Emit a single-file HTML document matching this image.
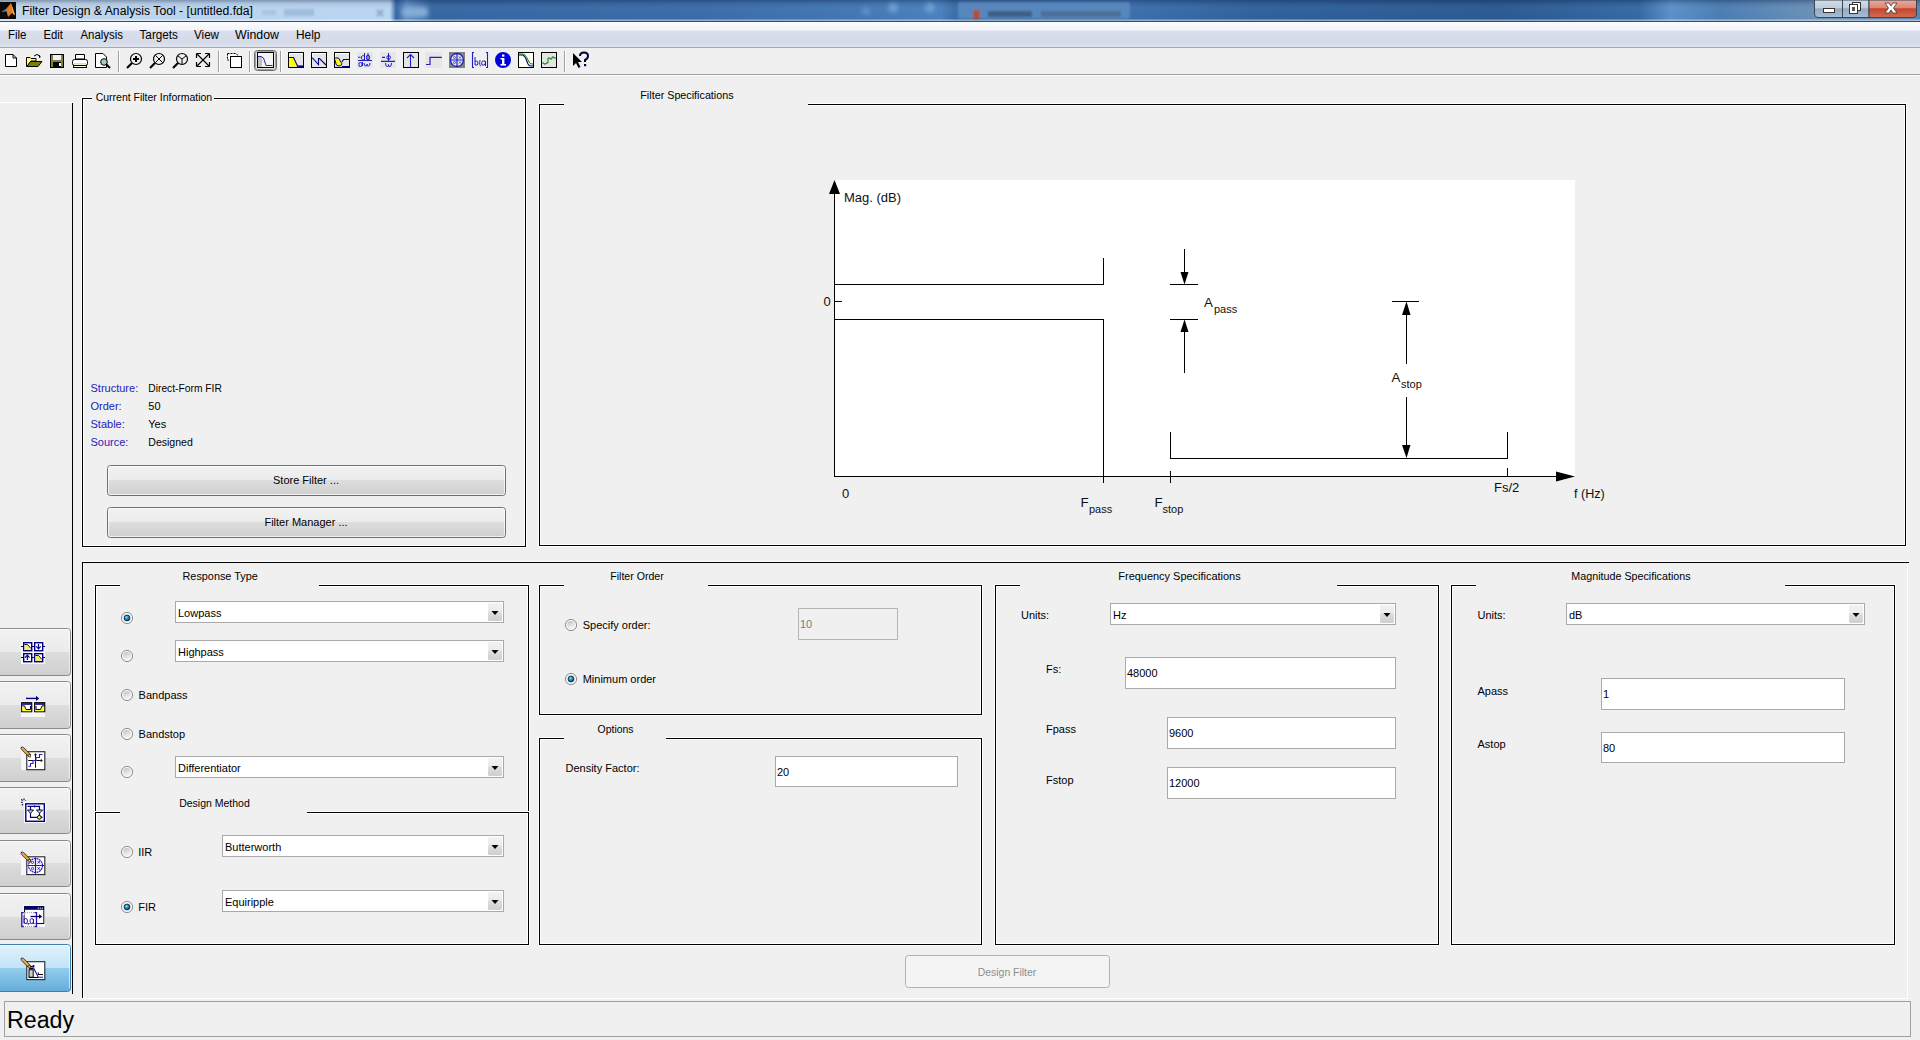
<!DOCTYPE html>
<html><head><meta charset="utf-8"><title>Filter Design &amp; Analysis Tool</title>
<style>html,body{margin:0;padding:0;width:1920px;height:1040px;overflow:hidden;background:#f0f0f0;font-family:"Liberation Sans",sans-serif;}
svg text{font-family:"Liberation Sans",sans-serif;}</style></head>
<body><div style="position:relative;width:1920px;height:1040px;overflow:hidden">
<svg width="1920" height="1040" viewBox="0 0 1920 1040" style="position:absolute;left:0;top:0" font-family="Liberation Sans">
<defs>
<linearGradient id="tb" x1="0" y1="0" x2="1" y2="0">
 <stop offset="0" stop-color="#c0d5ea"/>
 <stop offset="0.10" stop-color="#bbd4ee"/>
 <stop offset="0.2031" stop-color="#b8d5f2"/>
 <stop offset="0.2063" stop-color="#3466a2"/>
 <stop offset="0.2120" stop-color="#5d8fc5"/>
 <stop offset="0.2250" stop-color="#3466a2"/>
 <stop offset="0.3646" stop-color="#3a6ba8"/>
 <stop offset="0.448" stop-color="#4277b3"/>
 <stop offset="0.49" stop-color="#4a80bd"/>
 <stop offset="0.497" stop-color="#3a6da8"/>
 <stop offset="0.589" stop-color="#3a6eab"/>
 <stop offset="0.656" stop-color="#2f609b"/>
 <stop offset="0.78" stop-color="#2a5890"/>
 <stop offset="0.854" stop-color="#3468a3"/>
 <stop offset="0.87" stop-color="#5a90c8"/>
 <stop offset="0.896" stop-color="#4a7cb2"/>
 <stop offset="0.945" stop-color="#6a90b8"/>
 <stop offset="1" stop-color="#5a84b0"/>
</linearGradient>
<linearGradient id="tbv" x1="0" y1="0" x2="0" y2="1">
 <stop offset="0" stop-color="#102040" stop-opacity="0.35"/>
 <stop offset="0.18" stop-color="#102040" stop-opacity="0.08"/>
 <stop offset="0.5" stop-color="#fff" stop-opacity="0.02"/>
 <stop offset="0.9" stop-color="#fff" stop-opacity="0.0"/>
 <stop offset="0.95" stop-color="#fff" stop-opacity="0.45"/>
 <stop offset="1" stop-color="#fff" stop-opacity="0.45"/>
</linearGradient>
<linearGradient id="menu" x1="0" y1="0" x2="0" y2="1">
 <stop offset="0" stop-color="#fbfcfe"/>
 <stop offset="0.33" stop-color="#f1f3f9"/>
 <stop offset="0.36" stop-color="#d9deec"/>
 <stop offset="0.8" stop-color="#d6dbea"/>
 <stop offset="1" stop-color="#dfe3ef"/>
</linearGradient>
<linearGradient id="btn" x1="0" y1="0" x2="0" y2="1">
 <stop offset="0" stop-color="#f2f2f2"/>
 <stop offset="0.5" stop-color="#ebebeb"/>
 <stop offset="0.5" stop-color="#dddddd"/>
 <stop offset="1" stop-color="#cfcfcf"/>
</linearGradient>
<linearGradient id="btnsel" x1="0" y1="0" x2="0" y2="1">
 <stop offset="0" stop-color="#e3f3fc"/>
 <stop offset="0.5" stop-color="#c1e3f6"/>
 <stop offset="0.5" stop-color="#92cdee"/>
 <stop offset="1" stop-color="#64acd8"/>
</linearGradient>
<linearGradient id="ddb" x1="0" y1="0" x2="0" y2="1">
 <stop offset="0" stop-color="#f2f2f2"/>
 <stop offset="0.45" stop-color="#ebebeb"/>
 <stop offset="0.5" stop-color="#dddddd"/>
 <stop offset="1" stop-color="#cfcfcf"/>
</linearGradient>
<linearGradient id="wbtn" x1="0" y1="0" x2="0" y2="1">
 <stop offset="0" stop-color="#d3dde9"/>
 <stop offset="0.45" stop-color="#c1cdda"/>
 <stop offset="0.5" stop-color="#93a9c3"/>
 <stop offset="1" stop-color="#a9bdd3"/>
</linearGradient>
<linearGradient id="wclose" x1="0" y1="0" x2="0" y2="1">
 <stop offset="0" stop-color="#e9a99c"/>
 <stop offset="0.45" stop-color="#dd8674"/>
 <stop offset="0.5" stop-color="#c3452c"/>
 <stop offset="1" stop-color="#d86b55"/>
</linearGradient>
<radialGradient id="rdot" cx="0.4" cy="0.35" r="0.6">
 <stop offset="0" stop-color="#8ee4fa"/>
 <stop offset="0.5" stop-color="#2f8fc4"/>
 <stop offset="1" stop-color="#0d4a74"/>
</radialGradient>
<linearGradient id="rbg" x1="0.2" y1="0" x2="0.6" y2="1">
 <stop offset="0" stop-color="#c2c2c2"/>
 <stop offset="0.5" stop-color="#dedede"/>
 <stop offset="1" stop-color="#f6f6f6"/>
</linearGradient>
<filter id="bl1" x="-50%" y="-50%" width="200%" height="200%"><feGaussianBlur stdDeviation="1.3"/></filter>
<filter id="bl2" x="-50%" y="-50%" width="200%" height="200%"><feGaussianBlur stdDeviation="2.2"/></filter>
</defs>
<rect x="0" y="0" width="1920" height="1040" fill="#f0f0f0" />
<rect x="0" y="0" width="1920" height="21" fill="url(#tb)" />
<rect x="0" y="0" width="1920" height="21" fill="url(#tbv)" />
<g filter="url(#bl1)"><rect x="262" y="10" width="14" height="5" fill="#a5c0de" opacity="0.8"/><rect x="284" y="9" width="30" height="7" fill="#98b6d6" opacity="0.8"/><path d="M377 10 L383 16 M383 10 L377 16" stroke="#8ea7c2" stroke-width="2"/></g>
<g filter="url(#bl2)"><rect x="402" y="7" width="26" height="10" rx="4" fill="#86acd6"/><circle cx="866" cy="11" r="4" fill="#5d90c8"/><circle cx="893" cy="8" r="5" fill="#6a9ed2"/><circle cx="930" cy="8" r="5" fill="#6a9ed2"/></g>
<g filter="url(#bl1)"><rect x="958" y="2" width="172" height="17" rx="2" fill="#5f90c4" opacity="0.7"/><rect x="973" y="10" width="7" height="9" fill="#b0503a"/><rect x="988" y="11" width="44" height="6" fill="#3c5f88"/><rect x="1041" y="11" width="80" height="6" fill="#4d6f98"/></g>
<rect x="0" y="21" width="1921" height="1" fill="#3d4b5a" />
<g><rect x="0" y="2" width="16" height="17" fill="#0b0b0b"/><path d="M1 12 L6 9 L8 11 Z" fill="#3aa6c0"/><path d="M6 9 L11 3 L15 15 L12 13 L8 17 Z" fill="#e07b2a"/><path d="M11 3 L15 15 L13 14 Z" fill="#f5b45a"/></g>
<text x="22" y="15" font-size="12" fill="#000" textLength="231" lengthAdjust="spacingAndGlyphs" >Filter Design &amp; Analysis Tool - [untitled.fda]</text>
<g>
<path d="M1814.5 0 V14 Q1814.5 17.5 1818 17.5 H1869 V0 Z" fill="url(#wbtn)" stroke="#3a4553" stroke-width="1"/>
<path d="M1869 0 V17.5 H1913 Q1916.5 17.5 1916.5 14 V0 Z" fill="url(#wclose)" stroke="#3a4553" stroke-width="1"/>
<rect x="1842" y="0" width="1" height="18" fill="#3a4553" />
<rect x="1823.5" y="8.5" width="11" height="4" fill="#fff" stroke="#333" stroke-width="1"/>
<rect x="1852.5" y="2.5" width="8" height="8" fill="#fff" stroke="#333" stroke-width="1"/>
<rect x="1849.5" y="4.5" width="8" height="9" fill="#fff" stroke="#333" stroke-width="1"/>
<rect x="1852" y="7" width="3" height="4" fill="#555"/>
<path d="M1885 3 L1889 3 L1891 6 L1893 3 L1897 3 L1893.5 8 L1897 13 L1893 13 L1891 10 L1889 13 L1885 13 L1888.5 8 Z" fill="#fff" stroke="#3b3b3b" stroke-width="0.8"/>
</g>
<rect x="0" y="22" width="1920" height="25" fill="url(#menu)" />
<rect x="0" y="47" width="1921" height="1" fill="#a7a7a7" />
<text x="8" y="39" font-size="12" fill="#000" textLength="18.5" lengthAdjust="spacingAndGlyphs" >File</text>
<text x="43.5" y="39" font-size="12" fill="#000" textLength="19.5" lengthAdjust="spacingAndGlyphs" >Edit</text>
<text x="80.5" y="39" font-size="12" fill="#000" textLength="42.5" lengthAdjust="spacingAndGlyphs" >Analysis</text>
<text x="139.5" y="39" font-size="12" fill="#000" textLength="38.5" lengthAdjust="spacingAndGlyphs" >Targets</text>
<text x="194" y="39" font-size="12" fill="#000" textLength="25" lengthAdjust="spacingAndGlyphs" >View</text>
<text x="235" y="39" font-size="12" fill="#000" textLength="44" lengthAdjust="spacingAndGlyphs" >Window</text>
<text x="296" y="39" font-size="12" fill="#000" textLength="24.5" lengthAdjust="spacingAndGlyphs" >Help</text>
<rect x="0" y="48" width="1920" height="26" fill="#f0f0f0" />
<rect x="0" y="74" width="1921" height="1" fill="#a0a0a0" />
<rect x="0" y="75" width="1921" height="1" fill="#ffffff" />
<rect x="118" y="51" width="1" height="21" fill="#a0a0a0" />
<rect x="119" y="51" width="1" height="21" fill="#ffffff" />
<rect x="218" y="51" width="1" height="21" fill="#a0a0a0" />
<rect x="219" y="51" width="1" height="21" fill="#ffffff" />
<rect x="249" y="51" width="1" height="21" fill="#a0a0a0" />
<rect x="250" y="51" width="1" height="21" fill="#ffffff" />
<rect x="280" y="51" width="1" height="21" fill="#a0a0a0" />
<rect x="281" y="51" width="1" height="21" fill="#ffffff" />
<rect x="564" y="51" width="1" height="21" fill="#a0a0a0" />
<rect x="565" y="51" width="1" height="21" fill="#ffffff" />
<path d="M5.5 54.5 H13 L16.5 58 V66.5 H5.5 Z" fill="#fff" stroke="#000"/><path d="M13 54.5 V58 H16.5" fill="none" stroke="#000"/>
<path d="M26.5 57.5 H30 L31 58.5 H36 V61 H31 L27 66.5 H26.5 Z" fill="#ffff80" stroke="#000"/><path d="M27 66.5 L30.5 61.5 H42 L38 66.5 Z" fill="#808000" stroke="#000"/><path d="M34 56 Q37 53 40 56" fill="none" stroke="#000"/><path d="M39 55 L41 57 L39 58" fill="#000"/>
<rect x="50.5" y="54.5" width="13" height="13" fill="#808040" stroke="#000"/><rect x="53" y="55" width="8" height="5" fill="#f0f0f0"/><rect x="53" y="62" width="8" height="5" fill="#000"/><rect x="59" y="63" width="2" height="3" fill="#fff"/>
<path d="M75.5 54.5 H84.5 V59 H75.5 Z" fill="#fff" stroke="#000"/><rect x="72.5" y="59.5" width="15" height="6" rx="2" fill="#fff" stroke="#000"/><rect x="74" y="63" width="12" height="1.5" fill="#e8e870"/><rect x="73.5" y="65.5" width="13" height="2" fill="#fff" stroke="#000"/>
<path d="M95.5 53.5 H103 L106.5 57 V67.5 H95.5 Z" fill="#fff" stroke="#000"/><circle cx="104" cy="62" r="3.3" fill="#a8c8c8" stroke="#000"/><path d="M106 64 L110 68" stroke="#000" stroke-width="2"/>
<circle cx="136" cy="59" r="5.5" fill="#f0f0f0" stroke="#000" stroke-width="1.2"/><path d="M132 63 L127 68" stroke="#000" stroke-width="2.2"/><path d="M133 59 H139 M136 56 V62" stroke="#000" stroke-width="2"/>
<circle cx="159" cy="59" r="5.5" fill="#f0f0f0" stroke="#000" stroke-width="1.2"/><path d="M155 63 L150 68" stroke="#000" stroke-width="2.2"/><path d="M155.5 55.5 L162.5 62.5 M162.5 55.5 L155.5 62.5" stroke="#000" stroke-width="1"/>
<circle cx="182" cy="59" r="5.5" fill="#f0f0f0" stroke="#000" stroke-width="1.2"/><path d="M178 63 L173 68" stroke="#000" stroke-width="2.2"/><path d="M182 59 V64 M182 59 L178 56 M182 59 L186 56" stroke="#000" stroke-width="1"/>
<path d="M197 54 L209 66 M209 54 L197 66" stroke="#000" stroke-width="1.2"/><path d="M196.5 53.5 H201 M196.5 53.5 V58 M209.5 53.5 H205 M209.5 53.5 V58 M196.5 66.5 H201 M196.5 66.5 V62 M209.5 66.5 H205 M209.5 66.5 V62" stroke="#000" stroke-width="1.2"/>
<path d="M227.5 53.5 H236 L237.5 55 V60 H227.5 Z" fill="#fff" stroke="#000" stroke-dasharray="2 1"/><rect x="230.5" y="56.5" width="11" height="11" fill="#fff" stroke="#000"/>
<rect x="254.5" y="50.5" width="22" height="20" rx="3" fill="#dcdcdc" stroke="#6b6b6b"/><rect x="255.5" y="51.5" width="20" height="18" rx="2" fill="#e6e6e6" stroke="#a0a0a0"/><rect x="257.5" y="52.5" width="16" height="15" fill="#f4f4f4" stroke="#000"/><rect x="258" y="57" width="4" height="10" fill="#c0c0c0"/><path d="M258 56.5 H261 L263.5 58 L266 65.5 H272.5" fill="none" stroke="#2020c0"/>
<rect x="288.5" y="52.5" width="15" height="15" fill="#e4e4e4" stroke="#000"/><rect x="289" y="53" width="14" height="14" fill="#e4e4e4"/><path d="M289 53.5 H303 M289.5 53 V58" stroke="#fff"/><path d="M289 58 H293 L297 66.5 H289 Z" fill="#ffff00"/><path d="M289 57.5 H293.5 L297.5 66 H303" fill="none" stroke="#000080" stroke-width="1.1"/><path d="M297 66.5 H303" stroke="#000080" stroke-width="1.2"/>
<rect x="311.5" y="52.5" width="15" height="15" fill="#e4e4e4" stroke="#000"/><path d="M312 53.5 H326 M312.5 53 V58" stroke="#fff"/><path d="M312 57.5 L318.5 64.5 V58.5 H319.5 L326 65" fill="none" stroke="#000080" stroke-width="1.1"/>
<rect x="334.5" y="52.5" width="15" height="15" fill="#e4e4e4" stroke="#000"/><path d="M335 53.5 H349 M335.5 53 V58" stroke="#fff"/><path d="M335 58.5 H338.5 L341.5 63.5 L341 65.5 H337 Z" fill="#ffff00"/><path d="M335 58 H338.5 L341.8 63.5 Q342 65.8 340 65.8 H338 Q336.5 65.8 336 64 L335 60" fill="none" stroke="#000080" stroke-width="1"/><path d="M342 62 L343.5 59.5 H349 M342 66.5 H349" fill="none" stroke="#000080" stroke-width="1.1"/>
<rect x="357" y="52" width="16" height="16" fill="#e6e6e6"/><path d="M358 60.5 H372 M358 57.3 H360.5" fill="none" stroke="#2020c0" stroke-width="1.1"/><path d="M364.5 53 V60 M361.5 57.8 A1.6 1.6 0 1 0 364.5 57.8 A1.6 1.6 0 1 0 361.5 57.8 M368 53 V60 M366.5 57.5 A1.6 1.8 0 1 0 369.6 57.5 A1.6 1.8 0 1 0 366.5 57.5 M362.5 62 V66 M361.8 64.5 A1.5 1.5 0 1 0 359 64.5 A1.5 1.5 0 1 0 361.8 64.5 M364 63 Q364 66.5 366 66 Q367 66.5 367 64 Q367 66.5 368.5 66 Q370 66 370 63" fill="none" stroke="#2020c0" stroke-width="1"/>
<rect x="380" y="52" width="16" height="16" fill="#e6e6e6"/><path d="M381 61.3 H395 M382 57.3 H385" fill="none" stroke="#2020c0" stroke-width="1.2"/><path d="M388.5 53 V61 M386.8 57.5 A1.8 2 0 1 0 390.4 57.5 A1.8 2 0 1 0 386.8 57.5 M385.5 63 Q385.5 67 387.5 66.5 Q388.5 67 388.5 64.5 Q388.5 67 390 66.5 Q391.5 66.5 391.5 63" fill="none" stroke="#2020c0" stroke-width="1"/>
<rect x="403.5" y="52.5" width="15" height="15" fill="#e4e4e4" stroke="#000"/><path d="M410.5 67 V54.5 M407 58 L410.5 54.5 L414 58" fill="none" stroke="#2020c0" stroke-width="1.1"/>
<rect x="425" y="52" width="17" height="16" fill="#e6e6e6"/><path d="M426 64.5 H430 V57.3 H441.8" fill="none" stroke="#2020c0" stroke-width="1.2"/>
<rect x="449" y="52" width="16" height="16" fill="#808080"/><circle cx="457" cy="60" r="6.5" fill="#e8e8e8" stroke="#2020c0" stroke-width="1.3"/><path d="M457 53.5 V66.5 M450.5 60 H463.5" stroke="#2020c0" stroke-width="1.2"/><circle cx="454.5" cy="57.5" r="1" fill="none" stroke="#2020c0" stroke-width="0.7"/><circle cx="454.5" cy="62.5" r="1" fill="none" stroke="#2020c0" stroke-width="0.7"/><path d="M459 56.5 L461 58.5 M461 56.5 L459 58.5 M459 61.5 L461 63.5 M461 61.5 L459 63.5" stroke="#2020c0" stroke-width="0.7"/>
<path d="M474 52.5 H472.5 V67.5 H474 M486 52.5 H487.5 V67.5 H486" fill="none" stroke="#2020c0" stroke-width="1.1"/><path d="M475 57 V65 Q478 66 478 63 Q478 60 475 61.5 M480 60 Q479 66 481 66 M482.5 61 Q486 60 485.5 63 Q485 66 482 65 Q481 62 482.5 61 M485.5 61 V66" fill="none" stroke="#2020c0" stroke-width="1"/>
<circle cx="503" cy="60" r="8" fill="#0000e0"/><rect x="502" y="58" width="2.4" height="6" fill="#fff"/><rect x="500.5" y="64" width="5.5" height="1.6" fill="#fff"/><rect x="500.5" y="58" width="3" height="1.4" fill="#fff"/><rect x="502" y="54.5" width="2.4" height="2.2" fill="#fff"/>
<rect x="518.5" y="52.5" width="15" height="15" fill="#fffff4" stroke="#000"/><path d="M519 55 H522 Q524 55 526 59 L528 64 Q529 66 531 66 H533" fill="none" stroke="#000080" stroke-width="1.1"/><path d="M519 54 H523 Q525 54 527 58 L529 62 Q530 64 532 64 H533" fill="none" stroke="#008000" stroke-width="1"/>
<rect x="541.5" y="52.5" width="15" height="15" fill="#e4e4e4" stroke="#000"/><path d="M542 63 H544 V64 H546 V63 H548 V58 H550 V59 H552 V57 H554 V58 H556" fill="none" stroke="#008000" stroke-width="1"/>
<path d="M573 53 V66 L576 63 L578.5 68 L580.5 67 L578 62 H582 Z" fill="#000"/><path d="M580 56 Q580 52.5 584 52.5 Q588 52.5 588 56 Q588 58.5 585 60 V62" fill="none" stroke="#000040" stroke-width="2"/><rect x="584" y="64" width="2.2" height="2.2" fill="#000040"/>
<rect x="0" y="102" width="73" height="1" fill="#ffffff" />
<rect x="72" y="103" width="1" height="891" fill="#000" />
<path d="M-3 628.5 H67.5 Q70.5 628.5 70.5 631.5 V672.5 Q70.5 675.5 67.5 675.5 H-3 Z" fill="url(#btn)" stroke="#8a8a8a"/>
<path d="M-3 629.5 H67.5 Q69.5 629.5 69.5 631.5 V672.5" fill="none" stroke="#fff" stroke-opacity="0.6"/>
<path d="M-3 681.5 H67.5 Q70.5 681.5 70.5 684.5 V725.5 Q70.5 728.5 67.5 728.5 H-3 Z" fill="url(#btn)" stroke="#8a8a8a"/>
<path d="M-3 682.5 H67.5 Q69.5 682.5 69.5 684.5 V725.5" fill="none" stroke="#fff" stroke-opacity="0.6"/>
<path d="M-3 734.5 H67.5 Q70.5 734.5 70.5 737.5 V778.5 Q70.5 781.5 67.5 781.5 H-3 Z" fill="url(#btn)" stroke="#8a8a8a"/>
<path d="M-3 735.5 H67.5 Q69.5 735.5 69.5 737.5 V778.5" fill="none" stroke="#fff" stroke-opacity="0.6"/>
<path d="M-3 787.5 H67.5 Q70.5 787.5 70.5 790.5 V830.5 Q70.5 833.5 67.5 833.5 H-3 Z" fill="url(#btn)" stroke="#8a8a8a"/>
<path d="M-3 788.5 H67.5 Q69.5 788.5 69.5 790.5 V830.5" fill="none" stroke="#fff" stroke-opacity="0.6"/>
<path d="M-3 840.5 H67.5 Q70.5 840.5 70.5 843.5 V883.5 Q70.5 886.5 67.5 886.5 H-3 Z" fill="url(#btn)" stroke="#8a8a8a"/>
<path d="M-3 841.5 H67.5 Q69.5 841.5 69.5 843.5 V883.5" fill="none" stroke="#fff" stroke-opacity="0.6"/>
<path d="M-3 893.5 H67.5 Q70.5 893.5 70.5 896.5 V936.5 Q70.5 939.5 67.5 939.5 H-3 Z" fill="url(#btn)" stroke="#8a8a8a"/>
<path d="M-3 894.5 H67.5 Q69.5 894.5 69.5 896.5 V936.5" fill="none" stroke="#fff" stroke-opacity="0.6"/>
<path d="M-3 944.5 H67.5 Q70.5 944.5 70.5 947.5 V988.5 Q70.5 991.5 67.5 991.5 H-3 Z" fill="url(#btnsel)" stroke="#3c7fb1"/>
<path d="M-3 945.5 H67.5 Q69.5 945.5 69.5 947.5 V988.5" fill="none" stroke="#fff" stroke-opacity="0.6"/>
<g transform="translate(21,640)"><rect x="0" y="1" width="24" height="23" fill="#f7f7fb"/><path d="M0 6.5 H24 M0 17.5 H24" stroke="#000080" stroke-width="1.1"/><g fill="#ffffff" stroke="#000080" stroke-width="1.4"><rect x="2.7" y="2.7" width="8" height="8"/><rect x="13.7" y="2.7" width="8" height="8"/><rect x="2.7" y="13.7" width="8" height="8"/><rect x="13.7" y="13.7" width="8" height="8"/></g><path d="M3.5 5 H6.5 L10 9 V10 H3.5 Z M14.5 16 H17.5 L21 20 V21 H14.5 Z" fill="#f0f060"/><path d="M3.5 4.5 H6.5 L10 8.5 M14.5 15.5 H17.5 L21 19.5" fill="none" stroke="#101030" stroke-width="1"/><path d="M17.5 4 V8" stroke="#000080" stroke-width="1.2"/><path d="M15.3 6.3 L17.5 8.8 L19.7 6.3" fill="none" stroke="#000080" stroke-width="1.2"/><path d="M6.3 20 V16" stroke="#000080" stroke-width="1.2"/><path d="M4.1 17.7 L6.3 15.2 L8.5 17.7" fill="none" stroke="#000080" stroke-width="1.2"/></g>
<g transform="translate(21,694)"><rect x="0" y="7" width="24" height="16" fill="#f7f7fb"/><path d="M5 4.4 H16" stroke="#000080" stroke-width="1.4"/><path d="M15 1.8 L18.2 4.4 L15 7 Z" fill="#000080"/><rect x="0.7" y="8.7" width="10" height="9" fill="#fff" stroke="#000" stroke-width="1.2"/><rect x="13.7" y="8.7" width="10" height="9" fill="#fff" stroke="#000" stroke-width="1.2"/><rect x="1.2" y="9.2" width="9" height="1.6" fill="#000080"/><rect x="14.2" y="9.2" width="9" height="1.6" fill="#000080"/><path d="M1.3 12.3 H3.5 L5 16 H10.2 V17.2 H1.3 Z M23.2 12.3 H21 L19.5 16 H14.2 V17.2 H23.2 Z" fill="#ffff20"/><path d="M1.3 11.8 H3.5 L5 15.5 H9.5 V12 M23.2 11.8 H21 L19.5 15.5 H15 V12" fill="none" stroke="#000060" stroke-width="1"/></g>
<g transform="translate(21,746)"><rect x="0" y="4" width="24" height="20" fill="#f7f7fb"/><rect x="5.8" y="5.7" width="18" height="18" fill="#fff" stroke="#222" stroke-width="1.1"/><path d="M14.5 7.8 V21.8 M7.2 14.5 H21" fill="none" stroke="#111" stroke-width="1"/><path d="M12.8 9.3 L14.5 7.3 L16.2 9.3 Z M19.8 12.8 L21.8 14.5 L19.8 16.2 Z" fill="#111"/><path d="M7.3 20.3 H9.5 V17.5 H12 V14.5 H15 V11.5 H18.5 V8.5 H21.5" fill="none" stroke="#3020c0" stroke-width="1.1"/><path d="M1.3 2.3 L8 9" stroke="#3a2a10" stroke-width="3.4" stroke-linecap="round"/><path d="M1.3 2.3 L8 9" stroke="#e8b048" stroke-width="2"/><path d="M0.8 1.8 L2.3 3.3" stroke="#d090b0" stroke-width="2.4"/><path d="M6.5 9 L9 11.5 L9.8 8.3 Z" fill="#f0d0a0" stroke="#3a2a10" stroke-width="0.8"/></g>
<g transform="translate(21,798)"><rect x="3" y="4" width="22" height="21" fill="#f7f7fb"/><rect x="4.8" y="5.8" width="18.5" height="17.5" fill="#fff" stroke="#000080" stroke-width="1.4"/><path d="M6.5 8.4 H18.5 V12 M9.5 8.4 V12 M9.5 15 V19.3 H16.5" fill="none" stroke="#000080" stroke-width="1.2"/><path d="M13 7 L15 8.4 L13 9.8 Z" fill="#000080"/><path d="M6.5 12 H12.5 L9.5 15.2 Z M15.5 12 H21.5 L18.5 15.2 Z" fill="#e8f0c0" stroke="#000040" stroke-width="1"/><path d="M18.5 15.2 V17.5" stroke="#000040" stroke-width="1.2"/><circle cx="18.3" cy="19.3" r="1.9" fill="#f0f060" stroke="#000" stroke-width="1"/><path d="M20.3 18 L21.8 19.3 L20.3 20.6 Z" fill="#000"/><path d="M0.3 1.3 L1.5 2.5 M3 0.5 V2.3 M4.8 2 V2.6 M0 4.3 H1.8 M0.8 7.3 L2 6" stroke="#000040" stroke-width="1.1"/></g>
<g transform="translate(21,851)"><rect x="0" y="4" width="24" height="20" fill="#f7f7fb"/><rect x="5.8" y="5.8" width="18" height="17.8" fill="#fff" stroke="#222" stroke-width="1.1"/><circle cx="14.5" cy="14.5" r="7" fill="none" stroke="#2010c0" stroke-width="1.2" stroke-dasharray="2 0.6"/><path d="M14.5 6.5 V22.8 M6.5 14.5 H23" stroke="#2010c0" stroke-width="1.2"/><circle cx="11.5" cy="11.3" r="1.2" fill="none" stroke="#2010c0" stroke-width="0.9"/><circle cx="11.5" cy="17.5" r="1.2" fill="none" stroke="#2010c0" stroke-width="0.9"/><path d="M16.5 10 L19 12.6 M19 10 L16.5 12.6 M16.5 16.2 L19 18.8 M19 16.2 L16.5 18.8" stroke="#2010c0" stroke-width="0.9"/><path d="M1.3 2.3 L7.8 8.8" stroke="#3a2a10" stroke-width="3.4" stroke-linecap="round"/><path d="M1.3 2.3 L7.8 8.8" stroke="#e8b048" stroke-width="2"/><path d="M0.8 1.8 L2.3 3.3" stroke="#d090b0" stroke-width="2.4"/><path d="M6.5 9 L9 11.5 L9.8 8.3 Z" fill="#f0d0a0" stroke="#3a2a10" stroke-width="0.8"/></g>
<g transform="translate(21,903)"><rect x="2" y="2" width="22" height="22" fill="#f7f7fb"/><rect x="3.5" y="3.5" width="19.3" height="17" fill="#fbfbfb" stroke="#111" stroke-width="1"/><rect x="3.5" y="3.3" width="19.5" height="3.5" fill="#000070"/><circle cx="17.3" cy="5.2" r="0.6" fill="#fff"/><circle cx="19.3" cy="5.2" r="0.6" fill="#fff"/><circle cx="21.3" cy="5.2" r="0.6" fill="#fff"/><rect x="0.5" y="9" width="15.5" height="15" fill="#fff" opacity="0.6"/><path d="M2.8 9.6 H0.8 V23.5 H2.8 M13.5 9.6 H15.5 V23.5 H13.5" fill="none" stroke="#3010b0" stroke-width="1.3"/><path d="M4 9.6 H13 M4 23.5 H13" stroke="#909090" stroke-width="0.9" stroke-dasharray="1 1"/><path d="M3 12 V20.5 M3 17.3 Q3 15.5 4.8 15.5 Q6.5 15.5 6.5 18 Q6.5 20.5 4.8 20.5 Q3 20.5 3 18.5 M8 20 L7 22 M9 18 Q9 15.5 10.8 15.5 Q12.5 15.5 12.5 18 Q12.5 20.5 10.8 20.5 Q9 20.5 9 18 M12.5 16 V21" fill="none" stroke="#2010a0" stroke-width="0.9"/><path d="M9.5 13.5 H19" stroke="#000070" stroke-width="1.3"/><path d="M18 11.2 L21.3 13.5 L18 15.8 Z" fill="#000070"/></g>
<g transform="translate(21,957)"><rect x="5.8" y="4.7" width="18" height="17.9" fill="#fff" stroke="#1a2a30" stroke-width="1.1"/><rect x="8" y="12.7" width="4.2" height="7.5" fill="#d0d0d0" stroke="#000" stroke-width="1"/><path d="M7.8 9.8 H12.5 V8" fill="none" stroke="#000060" stroke-width="1.6"/><path d="M7.8 11.5 H12.2" stroke="#000" stroke-width="1"/><path d="M12.5 10.8 L17.3 20.3 H22" fill="none" stroke="#2010a0" stroke-width="1.1"/><path d="M17.3 15.5 V17.5 H22" fill="none" stroke="#000" stroke-width="1.1"/><path d="M8 20.5 H17" stroke="#000" stroke-width="1"/><path d="M1.3 2.3 L7.8 8.8" stroke="#3a2a10" stroke-width="3.4" stroke-linecap="round"/><path d="M1.3 2.3 L7.8 8.8" stroke="#e8b048" stroke-width="2"/><path d="M0.8 1.8 L2.3 3.3" stroke="#d090b0" stroke-width="2.4"/><path d="M6.5 9 L9 11.5 L9.8 8.3 Z" fill="#f0d0a0" stroke="#3a2a10" stroke-width="0.8"/></g>
<rect x="81" y="97" width="446" height="1" fill="#fff" />
<rect x="81" y="547" width="446" height="1" fill="#fff" />
<rect x="81" y="97" width="1" height="451" fill="#fff" />
<rect x="526" y="97" width="1" height="451" fill="#fff" />
<rect x="83" y="99" width="442" height="1" fill="#fff" />
<rect x="83" y="545" width="442" height="1" fill="#fff" />
<rect x="83" y="99" width="1" height="447" fill="#fff" />
<rect x="524" y="99" width="1" height="447" fill="#fff" />
<rect x="82" y="98" width="444" height="1" fill="#000" />
<rect x="82" y="546" width="444" height="1" fill="#000" />
<rect x="82" y="98" width="1" height="449" fill="#000" />
<rect x="525" y="98" width="1" height="449" fill="#000" />
<rect x="92" y="96" width="122" height="5" fill="#f0f0f0" />
<text x="95.7" y="101" font-size="11" fill="#000" textLength="116.5" lengthAdjust="spacingAndGlyphs" >Current Filter Information</text>
<text x="90.5" y="392" font-size="11" fill="#2222b8" >Structure:</text>
<text x="148.3" y="392" font-size="11" fill="#000" textLength="73.5" lengthAdjust="spacingAndGlyphs" >Direct-Form FIR</text>
<text x="90.5" y="410" font-size="11" fill="#2222b8" >Order:</text>
<text x="148.3" y="410" font-size="11" fill="#000" >50</text>
<text x="90.5" y="428" font-size="11" fill="#2222b8" >Stable:</text>
<text x="148.3" y="428" font-size="11" fill="#000" >Yes</text>
<text x="90.5" y="446" font-size="11" fill="#2222b8" >Source:</text>
<text x="148.3" y="446" font-size="11" fill="#000" textLength="44.5" lengthAdjust="spacingAndGlyphs" >Designed</text>
<rect x="107.5" y="465.5" width="398" height="30" rx="3" fill="url(#btn)" stroke="#707070"/>
<rect x="108.5" y="466.5" width="396" height="28" rx="2" fill="none" stroke="#fff" stroke-opacity="0.7"/>
<text x="306.0" y="484" font-size="11" fill="#000" text-anchor="middle" >Store Filter ...</text>
<rect x="107.5" y="507.5" width="398" height="30" rx="3" fill="url(#btn)" stroke="#707070"/>
<rect x="108.5" y="508.5" width="396" height="28" rx="2" fill="none" stroke="#fff" stroke-opacity="0.7"/>
<text x="306.0" y="526" font-size="11" fill="#000" text-anchor="middle" >Filter Manager ...</text>
<rect x="538" y="103" width="1369" height="1" fill="#fff" />
<rect x="538" y="546" width="1369" height="1" fill="#fff" />
<rect x="538" y="103" width="1" height="444" fill="#fff" />
<rect x="1906" y="103" width="1" height="444" fill="#fff" />
<rect x="540" y="105" width="1365" height="1" fill="#fff" />
<rect x="540" y="544" width="1365" height="1" fill="#fff" />
<rect x="540" y="105" width="1" height="440" fill="#fff" />
<rect x="1904" y="105" width="1" height="440" fill="#fff" />
<rect x="539" y="104" width="1367" height="1" fill="#000" />
<rect x="539" y="545" width="1367" height="1" fill="#000" />
<rect x="539" y="104" width="1" height="442" fill="#000" />
<rect x="1905" y="104" width="1" height="442" fill="#000" />
<rect x="564" y="102" width="244" height="5" fill="#f0f0f0" />
<text x="640.3" y="99" font-size="11" fill="#000" textLength="93.3" lengthAdjust="spacingAndGlyphs" >Filter Specifications</text>
<rect x="834" y="180" width="741" height="296" fill="#ffffff" />
<rect x="834" y="190" width="1" height="287" fill="#000" />
<rect x="834" y="476" width="727" height="1" fill="#000" />
<path d="M834.5 180 L829 194 L840 194 Z" fill="#000"/>
<path d="M1575 476.5 L1556 471.5 L1556 481.5 Z" fill="#000"/>
<rect x="834" y="301" width="8" height="1" fill="#000" />
<text x="823.5" y="306" font-size="13" fill="#111" >0</text>
<text x="842" y="498" font-size="13" fill="#111" >0</text>
<text x="844" y="202" font-size="13" fill="#111" textLength="57" lengthAdjust="spacingAndGlyphs" >Mag. (dB)</text>
<rect x="834" y="284" width="270" height="1" fill="#000" />
<rect x="1103" y="258" width="1" height="27" fill="#000" />
<rect x="834" y="319" width="270" height="1" fill="#000" />
<rect x="1103" y="319" width="1" height="164" fill="#000" />
<rect x="1170" y="471" width="1" height="12" fill="#000" />
<rect x="1507" y="468" width="1" height="9" fill="#000" />
<rect x="1170" y="432" width="1" height="27" fill="#000" />
<rect x="1170" y="458" width="338" height="1" fill="#000" />
<rect x="1507" y="432" width="1" height="27" fill="#000" />
<rect x="1170" y="284" width="28" height="1" fill="#000" />
<rect x="1170" y="319" width="28" height="1" fill="#000" />
<rect x="1184" y="249" width="1" height="25" fill="#000" />
<path d="M1184.5 284.5 L1180.5 272 L1188.5 272 Z" fill="#000"/>
<rect x="1184" y="331" width="1" height="42" fill="#000" />
<path d="M1184.5 319.5 L1180.5 332 L1188.5 332 Z" fill="#000"/>
<text x="1204" y="307" font-size="13.33" fill="#111" >A</text>
<text x="1214" y="313" font-size="11" fill="#111" >pass</text>
<rect x="1392" y="301" width="27" height="1" fill="#000" />
<rect x="1406" y="314" width="1" height="50" fill="#000" />
<path d="M1406.5 301.5 L1402 315 L1410.5 315 Z" fill="#000"/>
<rect x="1406" y="397" width="1" height="50" fill="#000" />
<path d="M1406.5 458 L1402 445 L1410.5 445 Z" fill="#000"/>
<text x="1391.5" y="381.5" font-size="13.33" fill="#111" >A</text>
<text x="1401" y="387.5" font-size="11" fill="#111" >stop</text>
<text x="1080.5" y="507" font-size="13.33" fill="#111" >F</text>
<text x="1089" y="513" font-size="11" fill="#111" >pass</text>
<text x="1154.5" y="507" font-size="13.33" fill="#111" >F</text>
<text x="1162.5" y="513" font-size="11" fill="#111" >stop</text>
<text x="1494" y="491.5" font-size="13" fill="#111" >Fs/2</text>
<text x="1574" y="498" font-size="13.33" fill="#111" textLength="30.8" lengthAdjust="spacingAndGlyphs" >f (Hz)</text>
<rect x="82" y="561" width="1827" height="1" fill="#fff" />
<rect x="82" y="562" width="1827" height="1" fill="#000" />
<rect x="82" y="562" width="1" height="437" fill="#000" />
<rect x="83" y="563" width="1" height="435" fill="#fff" />
<rect x="1907" y="563" width="1" height="436" fill="#fff" />
<rect x="82" y="998" width="1826" height="1" fill="#fff" />
<rect x="94" y="584" width="436" height="1" fill="#fff" />
<rect x="94" y="945" width="436" height="1" fill="#fff" />
<rect x="94" y="584" width="1" height="362" fill="#fff" />
<rect x="529" y="584" width="1" height="362" fill="#fff" />
<rect x="96" y="586" width="432" height="1" fill="#fff" />
<rect x="96" y="943" width="432" height="1" fill="#fff" />
<rect x="96" y="586" width="1" height="358" fill="#fff" />
<rect x="527" y="586" width="1" height="358" fill="#fff" />
<rect x="95" y="585" width="434" height="1" fill="#000" />
<rect x="95" y="944" width="434" height="1" fill="#000" />
<rect x="95" y="585" width="1" height="360" fill="#000" />
<rect x="528" y="585" width="1" height="360" fill="#000" />
<rect x="120" y="583" width="199" height="5" fill="#f0f0f0" />
<text x="182.5" y="580" font-size="11" fill="#000" textLength="75.3" lengthAdjust="spacingAndGlyphs" >Response Type</text>
<rect x="94" y="811" width="436" height="1" fill="#fff" />
<rect x="95" y="812" width="434" height="1" fill="#000" />
<rect x="96" y="813" width="432" height="1" fill="#fff" />
<rect x="120" y="809" width="187" height="6" fill="#f0f0f0" />
<text x="179.2" y="807" font-size="11" fill="#000" textLength="70.6" lengthAdjust="spacingAndGlyphs" >Design Method</text>
<circle cx="127" cy="618" r="5.6" fill="#f8f8f8" stroke="#8f8f8f" stroke-width="1"/>
<circle cx="127" cy="618" r="3.9" fill="url(#rbg)"/>
<circle cx="127" cy="618" r="4.3" fill="#eaf3f8"/>
<circle cx="127" cy="618" r="2.9" fill="url(#rdot)" stroke="#0b3a5c" stroke-width="1"/>
<rect x="175.5" y="601.5" width="328" height="21" fill="#fff" stroke="#a9a9a9"/>
<rect x="488" y="603" width="14" height="18" rx="1.5" fill="url(#ddb)"/>
<path d="M491.5 611.0 H498.5 L495.0 615.0 Z" fill="#000"/>
<text x="178" y="617" font-size="11" fill="#000" >Lowpass</text>
<circle cx="127" cy="656" r="5.6" fill="#f8f8f8" stroke="#8f8f8f" stroke-width="1"/>
<circle cx="127" cy="656" r="3.9" fill="url(#rbg)"/>
<rect x="175.5" y="640.5" width="328" height="21" fill="#fff" stroke="#a9a9a9"/>
<rect x="488" y="642" width="14" height="18" rx="1.5" fill="url(#ddb)"/>
<path d="M491.5 650.0 H498.5 L495.0 654.0 Z" fill="#000"/>
<text x="178" y="656" font-size="11" fill="#000" >Highpass</text>
<circle cx="127" cy="695" r="5.6" fill="#f8f8f8" stroke="#8f8f8f" stroke-width="1"/>
<circle cx="127" cy="695" r="3.9" fill="url(#rbg)"/>
<text x="138.6" y="699" font-size="11" fill="#000" >Bandpass</text>
<circle cx="127" cy="734" r="5.6" fill="#f8f8f8" stroke="#8f8f8f" stroke-width="1"/>
<circle cx="127" cy="734" r="3.9" fill="url(#rbg)"/>
<text x="138.6" y="738" font-size="11" fill="#000" >Bandstop</text>
<circle cx="127" cy="772" r="5.6" fill="#f8f8f8" stroke="#8f8f8f" stroke-width="1"/>
<circle cx="127" cy="772" r="3.9" fill="url(#rbg)"/>
<rect x="175.5" y="756.5" width="328" height="21" fill="#fff" stroke="#a9a9a9"/>
<rect x="488" y="758" width="14" height="18" rx="1.5" fill="url(#ddb)"/>
<path d="M491.5 766.0 H498.5 L495.0 770.0 Z" fill="#000"/>
<text x="178" y="772" font-size="11" fill="#000" >Differentiator</text>
<circle cx="127" cy="852" r="5.6" fill="#f8f8f8" stroke="#8f8f8f" stroke-width="1"/>
<circle cx="127" cy="852" r="3.9" fill="url(#rbg)"/>
<text x="138.2" y="856" font-size="11" fill="#000" >IIR</text>
<rect x="222.5" y="835.5" width="281" height="21" fill="#fff" stroke="#a9a9a9"/>
<rect x="488" y="837" width="14" height="18" rx="1.5" fill="url(#ddb)"/>
<path d="M491.5 845.0 H498.5 L495.0 849.0 Z" fill="#000"/>
<text x="225" y="851" font-size="11" fill="#000" >Butterworth</text>
<circle cx="127" cy="907" r="5.6" fill="#f8f8f8" stroke="#8f8f8f" stroke-width="1"/>
<circle cx="127" cy="907" r="3.9" fill="url(#rbg)"/>
<circle cx="127" cy="907" r="4.3" fill="#eaf3f8"/>
<circle cx="127" cy="907" r="2.9" fill="url(#rdot)" stroke="#0b3a5c" stroke-width="1"/>
<text x="138.2" y="911" font-size="11" fill="#000" >FIR</text>
<rect x="222.5" y="890.5" width="281" height="21" fill="#fff" stroke="#a9a9a9"/>
<rect x="488" y="892" width="14" height="18" rx="1.5" fill="url(#ddb)"/>
<path d="M491.5 900.0 H498.5 L495.0 904.0 Z" fill="#000"/>
<text x="225" y="906" font-size="11" fill="#000" >Equiripple</text>
<rect x="538" y="584" width="445" height="1" fill="#fff" />
<rect x="538" y="715" width="445" height="1" fill="#fff" />
<rect x="538" y="584" width="1" height="132" fill="#fff" />
<rect x="982" y="584" width="1" height="132" fill="#fff" />
<rect x="540" y="586" width="441" height="1" fill="#fff" />
<rect x="540" y="713" width="441" height="1" fill="#fff" />
<rect x="540" y="586" width="1" height="128" fill="#fff" />
<rect x="980" y="586" width="1" height="128" fill="#fff" />
<rect x="539" y="585" width="443" height="1" fill="#000" />
<rect x="539" y="714" width="443" height="1" fill="#000" />
<rect x="539" y="585" width="1" height="130" fill="#000" />
<rect x="981" y="585" width="1" height="130" fill="#000" />
<rect x="564" y="583" width="144" height="5" fill="#f0f0f0" />
<text x="610.3" y="580.4" font-size="11" fill="#000" textLength="53.4" lengthAdjust="spacingAndGlyphs" >Filter Order</text>
<circle cx="571" cy="625" r="5.6" fill="#f8f8f8" stroke="#8f8f8f" stroke-width="1"/>
<circle cx="571" cy="625" r="3.9" fill="url(#rbg)"/>
<text x="582.7" y="629" font-size="11" fill="#000" >Specify order:</text>
<rect x="798.5" y="608.5" width="99" height="31" fill="#f0f0f0" stroke="#b5b5b5"/>
<text x="800" y="628" font-size="11" fill="#7a7a7a" >10</text>
<circle cx="571" cy="679" r="5.6" fill="#f8f8f8" stroke="#8f8f8f" stroke-width="1"/>
<circle cx="571" cy="679" r="3.9" fill="url(#rbg)"/>
<circle cx="571" cy="679" r="4.3" fill="#eaf3f8"/>
<circle cx="571" cy="679" r="2.9" fill="url(#rdot)" stroke="#0b3a5c" stroke-width="1"/>
<text x="582.7" y="683" font-size="11" fill="#000" >Minimum order</text>
<rect x="538" y="737" width="445" height="1" fill="#fff" />
<rect x="538" y="945" width="445" height="1" fill="#fff" />
<rect x="538" y="737" width="1" height="209" fill="#fff" />
<rect x="982" y="737" width="1" height="209" fill="#fff" />
<rect x="540" y="739" width="441" height="1" fill="#fff" />
<rect x="540" y="943" width="441" height="1" fill="#fff" />
<rect x="540" y="739" width="1" height="205" fill="#fff" />
<rect x="980" y="739" width="1" height="205" fill="#fff" />
<rect x="539" y="738" width="443" height="1" fill="#000" />
<rect x="539" y="944" width="443" height="1" fill="#000" />
<rect x="539" y="738" width="1" height="207" fill="#000" />
<rect x="981" y="738" width="1" height="207" fill="#000" />
<rect x="564" y="736" width="102" height="5" fill="#f0f0f0" />
<text x="597.6" y="733" font-size="11" fill="#000" textLength="35.9" lengthAdjust="spacingAndGlyphs" >Options</text>
<text x="565.5" y="772" font-size="11" fill="#000" >Density Factor:</text>
<rect x="775.5" y="756.5" width="182" height="30" fill="#fff" stroke="#a9a9a9"/>
<text x="777" y="776" font-size="11" fill="#000" >20</text>
<rect x="994" y="584" width="446" height="1" fill="#fff" />
<rect x="994" y="945" width="446" height="1" fill="#fff" />
<rect x="994" y="584" width="1" height="362" fill="#fff" />
<rect x="1439" y="584" width="1" height="362" fill="#fff" />
<rect x="996" y="586" width="442" height="1" fill="#fff" />
<rect x="996" y="943" width="442" height="1" fill="#fff" />
<rect x="996" y="586" width="1" height="358" fill="#fff" />
<rect x="1437" y="586" width="1" height="358" fill="#fff" />
<rect x="995" y="585" width="444" height="1" fill="#000" />
<rect x="995" y="944" width="444" height="1" fill="#000" />
<rect x="995" y="585" width="1" height="360" fill="#000" />
<rect x="1438" y="585" width="1" height="360" fill="#000" />
<rect x="1020" y="583" width="317" height="5" fill="#f0f0f0" />
<text x="1118.3" y="580" font-size="11" fill="#000" textLength="122.4" lengthAdjust="spacingAndGlyphs" >Frequency Specifications</text>
<text x="1021" y="619" font-size="11" fill="#000" >Units:</text>
<rect x="1110.5" y="603.5" width="285" height="21" fill="#fff" stroke="#a9a9a9"/>
<rect x="1380" y="605" width="14" height="18" rx="1.5" fill="url(#ddb)"/>
<path d="M1383.5 613.0 H1390.5 L1387.0 617.0 Z" fill="#000"/>
<text x="1113" y="619" font-size="11" fill="#000" >Hz</text>
<text x="1046" y="673" font-size="11" fill="#000" >Fs:</text>
<rect x="1125.5" y="657.5" width="270" height="31" fill="#fff" stroke="#a9a9a9"/>
<text x="1127" y="677" font-size="11" fill="#000" >48000</text>
<text x="1046" y="733" font-size="11" fill="#000" >Fpass</text>
<rect x="1167.5" y="717.5" width="228" height="31" fill="#fff" stroke="#a9a9a9"/>
<text x="1169" y="737" font-size="11" fill="#000" >9600</text>
<text x="1046" y="784" font-size="11" fill="#000" >Fstop</text>
<rect x="1167.5" y="767.5" width="228" height="31" fill="#fff" stroke="#a9a9a9"/>
<text x="1169" y="787" font-size="11" fill="#000" >12000</text>
<rect x="1450" y="584" width="446" height="1" fill="#fff" />
<rect x="1450" y="945" width="446" height="1" fill="#fff" />
<rect x="1450" y="584" width="1" height="362" fill="#fff" />
<rect x="1895" y="584" width="1" height="362" fill="#fff" />
<rect x="1452" y="586" width="442" height="1" fill="#fff" />
<rect x="1452" y="943" width="442" height="1" fill="#fff" />
<rect x="1452" y="586" width="1" height="358" fill="#fff" />
<rect x="1893" y="586" width="1" height="358" fill="#fff" />
<rect x="1451" y="585" width="444" height="1" fill="#000" />
<rect x="1451" y="944" width="444" height="1" fill="#000" />
<rect x="1451" y="585" width="1" height="360" fill="#000" />
<rect x="1894" y="585" width="1" height="360" fill="#000" />
<rect x="1476" y="583" width="309" height="5" fill="#f0f0f0" />
<text x="1571.3" y="580" font-size="11" fill="#000" textLength="119.3" lengthAdjust="spacingAndGlyphs" >Magnitude Specifications</text>
<text x="1477.5" y="619" font-size="11" fill="#000" >Units:</text>
<rect x="1566.5" y="603.5" width="298" height="21" fill="#fff" stroke="#a9a9a9"/>
<rect x="1849" y="605" width="14" height="18" rx="1.5" fill="url(#ddb)"/>
<path d="M1852.5 613.0 H1859.5 L1856.0 617.0 Z" fill="#000"/>
<text x="1569" y="619" font-size="11" fill="#000" >dB</text>
<text x="1477.5" y="695" font-size="11" fill="#000" >Apass</text>
<rect x="1601.5" y="678.5" width="243" height="31" fill="#fff" stroke="#a9a9a9"/>
<text x="1603" y="698" font-size="11" fill="#000" >1</text>
<text x="1477.5" y="748" font-size="11" fill="#000" >Astop</text>
<rect x="1601.5" y="732.5" width="243" height="30" fill="#fff" stroke="#a9a9a9"/>
<text x="1603" y="752" font-size="11" fill="#000" >80</text>
<rect x="905.5" y="955.5" width="204" height="32" rx="3" fill="#f4f4f4" stroke="#adb2b5"/>
<text x="1007.0" y="976" font-size="11" fill="#8d8d8d" textLength="58.5" lengthAdjust="spacingAndGlyphs" text-anchor="middle" >Design Filter</text>
<rect x="4.5" y="1001.5" width="1906" height="35" fill="#f0f0f0" stroke="#a0a0a0"/>
<text x="7" y="1027.5" font-size="23" fill="#000" textLength="67" lengthAdjust="spacingAndGlyphs" >Ready</text>
</svg>
</div></body></html>
